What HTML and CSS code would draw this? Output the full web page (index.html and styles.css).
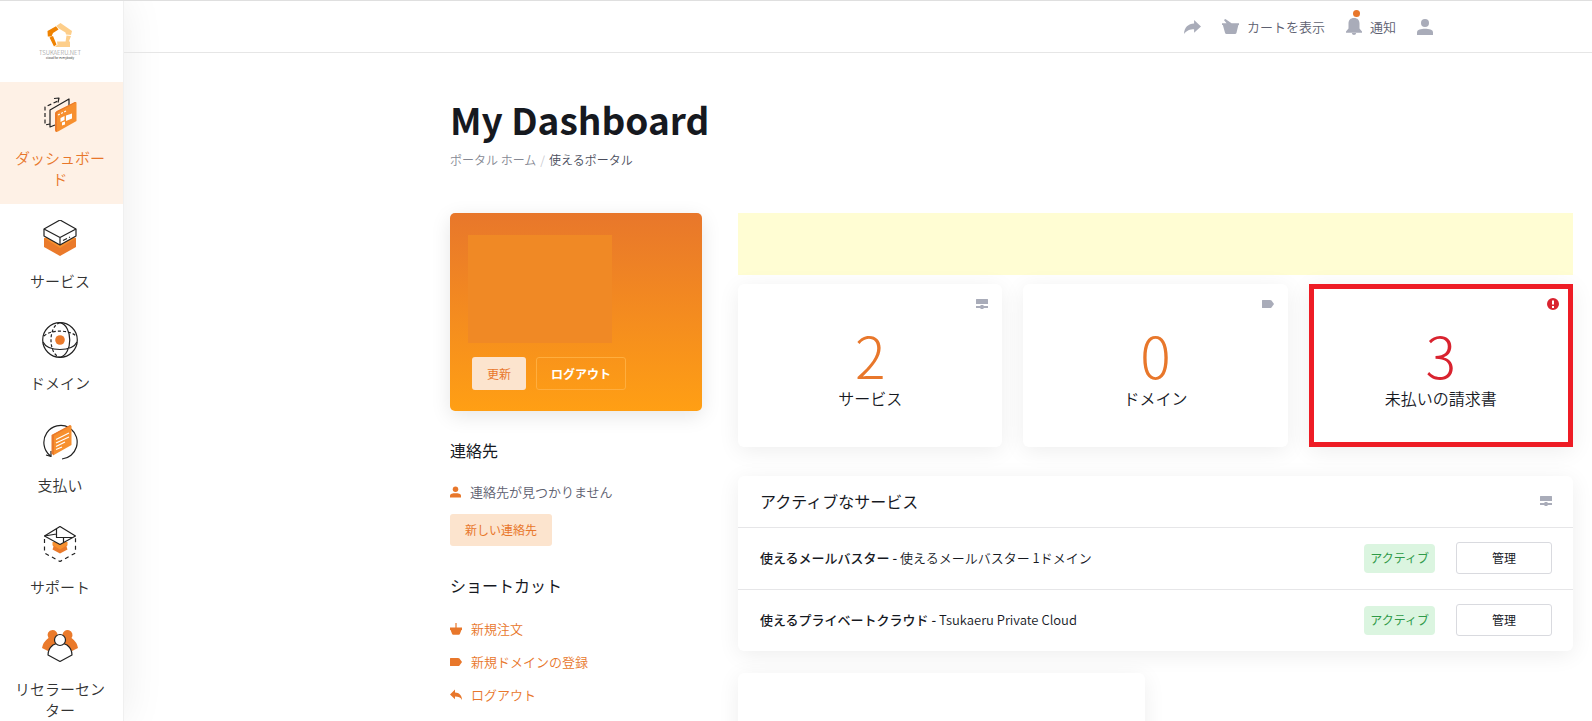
FILE: index.html
```html
<!DOCTYPE html>
<html lang="ja">
<head>
<meta charset="utf-8">
<title>My Dashboard</title>
<link rel="stylesheet" href="styles.css">
</head>
<body>
<svg class="defs" aria-hidden="true">
  <symbol id="i-user" viewBox="0 0 16 16"><circle cx="8" cy="4" r="4"/><path d="M0 16v-2.500C0 10.500 4 9.800 8 9.800s8 .7 8 3.700V16z"/></symbol>
  <symbol id="i-share" viewBox="0 0 16 13"><path d="M9.500 0L16 6l-6.500 6V8.500C5.500 8.500 2.500 9.500 0 13 .3 7 4 3.500 9.500 3.300z"/></symbol>
  <symbol id="i-reply" viewBox="0 0 12 11"><path d="M5 0L0 5l5 4.700V7c3.500 0 5.500.8 7 3.500C12 6 9.500 3.200 5 3z"/></symbol>
  <symbol id="i-cart" viewBox="0 0 16 14"><path d="M1.800.8L3.200 0 9 4h7v1.600h-.6L13.600 13q-.3 1-1.400 1H4.200q-1 0-1.300-1L.8 5.600H0V4h4.300z"/></symbol>
  <symbol id="i-basket" viewBox="0 0 12 12"><path d="M5.400 0h1.200v4.500H12V7h-.6L10 10.800q-.3.900-1.300.9H3.300q-1 0-1.300-.9L.6 7H0V4.500h5.400z"/></symbol>
  <symbol id="i-bell" viewBox="0 0 16 17"><path d="M8 0c3.600 0 5.500 2.200 5.500 5.500v5l2.500 3v1.300H0v-1.300l2.500-3v-5C2.500 2.200 4.400 0 8 0zM5.800 15h4.400q-.3 2-2.200 2t-2.200-2z"/></symbol>
  <symbol id="i-tag" viewBox="0 0 12 8"><path d="M.5 0H8q1 0 1.500.6L12 4 9.500 7.400Q9 8 8 8H.5Q0 8 0 7.500v-7Q0 0 .5 0z"/></symbol>
  <symbol id="i-server" viewBox="0 0 12 10"><path d="M.5 0h11q.5 0 .5.500V5H0V.5Q0 0 .5 0zM0 7h4l1-1h2l1 1h4v2H8L7 10H5L4 9H0z"/></symbol>
  <symbol id="i-alert" viewBox="0 0 12 12"><path fill-rule="evenodd" d="M6 0a6 6 0 1 1 0 12A6 6 0 0 1 6 0zM5 2.500v4h2v-4zM5 8v2h2V8z"/></symbol>
</svg>

<div class="app">
  <nav class="sidebar">
    <a class="brand" href="#" aria-label="TSUKAERU.NET">
      <svg class="brand-mark" viewBox="0 0 26 24" aria-hidden="true">
        <path fill="#ef8200" d="M.5 8L9 3.200l2.500 3.300L6 10l-1.500 3.500H.8zM2.500 14.500L6 13l3.500 8.500L7 23.500z"/>
        <path fill="#fdce8a" d="M9.500 2.800L13.500 0 25 8l-1 4-5-.5-.5-2L11 5zM19.500 12.500l4.500.5-2.500 6.500-3-.5zM10 18.500h13V24H9l-1-1 2.500-1z"/>
      </svg>
      <span class="brand-name">TSUKAERU.NET</span>
      <span class="brand-tag">cloud for everybody</span>
    </a>
    <ul class="menu">
      <li><a class="menu-item active" href="#">
        <svg class="menu-icon" viewBox="0 0 36 36">
          <path stroke-dasharray="4 2.500" d="M8 27l-5 1V10L16 4"/>
          <path d="M12 1.500l5-.5-1 4.500M13 28l-5 2V13L27 2v7"/>
          <path class="mid" d="M15 14L33 5q1.500-.5 1.500 1v18L16 34.500q-3 1-3-2V17q0-2 2-3z"/>
          <path class="deep" d="M13 17q0-2 2-3L33 5l1 .5L16 15q-1 1-1 3v17q-2 0-2-2.500z"/>
          <path class="light" stroke-dasharray="2 1.500" d="M16 18l8-4"/>
          <path class="white" d="M18.500 21l4-2v4l-4 2zM24 18.500l6-2v5L24 24zM20 25.500l3-1v3l-3 1z"/>
        </svg>
        <span>ダッシュボード</span></a></li>
      <li><a class="menu-item" href="#">
        <svg class="menu-icon" viewBox="0 0 36 36">
          <path class="deep" d="M2 18l5-1h22l5 1v9L18 36 2 27z"/>
          <path class="mid" d="M2 18l5-1h22l5 1-16 10z"/>
          <path fill="#fff" d="M18 0l16 9v7l-16 9-16-9V9z"/>
          <path d="M2 9l16 8.500L34 9M18 17.500V25M21 20.500l4-2M27 17.500l1-.5"/>
        </svg>
        <span>サービス</span></a></li>
      <li><a class="menu-item" href="#">
        <svg class="menu-icon" viewBox="0 0 36 36">
          <circle cx="18" cy="18" r="17.300"/>
          <path d="M18 .7c13 3 13 31.600 0 34.600M1 20c5 10 29 10 34 0"/>
          <path stroke-dasharray="3 2" d="M18 .7c-12 3-12 31.600 0 34.600M2 14c6-6.500 26-6.500 32 0"/>
          <circle class="deep" cx="18" cy="18" r="4.800"/>
        </svg>
        <span>ドメイン</span></a></li>
      <li><a class="menu-item" href="#">
        <svg class="menu-icon" viewBox="0 0 36 36">
          <path d="M27 3.500A17 17 0 0 0 8 31.500M29 5a17 17 0 0 1-9 30M4 31l5 1.500L9 27"/>
          <path class="mid" d="M10 11L28 1.500q1.500-.5 1.500 1V21L11 31.500z"/>
          <path class="deep" d="M9.500 11L28 1l1 .7L12 11.500V31l-2.500-1z"/>
          <path class="light" d="M14 15.500l13-6.500M14 19l13-6M14 22.500l9-4.500M14 25.500l6-2.500"/>
        </svg>
        <span>支払い</span></a></li>
      <li><a class="menu-item" href="#">
        <svg class="menu-icon" viewBox="0 0 36 36">
          <path class="deep" d="M10.500 19h15l-1 1.500 1 3-7.500 4-7.500-4 1-3z"/>
          <path class="mid" d="M10.500 16h15v3L18 23.500 10.500 19z"/>
          <path fill="#fff" d="M18 .5L33.500 10 18 18.500 2.500 10z"/>
          <path d="M2.500 10L14.500 8M14.500 3v8.500h16M21.500 16v-4.500"/>
          <path stroke-dasharray="4 3.500" d="M2.500 13v14L18 35.500 33.500 27V12"/>
        </svg>
        <span>サポート</span></a></li>
      <li><a class="menu-item" href="#">
        <svg class="menu-icon" viewBox="0 0 36 36">
          <path class="deep" d="M10.500 2a5 5 0 0 1 5 5L18 12l2.500-5a5 5 0 1 1 9 3q5.500 4 6.500 10l-6 3H6l-6-3Q1 14 6.500 10a5 5 0 0 1 4-8z"/>
          <path fill="#fff" d="M11 17q7-4 14 0 5 4 5 10l-12 6.500L6 27q0-6 5-10z"/>
          <circle cx="18" cy="12" r="5.500" fill="#fff"/>
        </svg>
        <span>リセラーセンター</span></a></li>
    </ul>
  </nav>

  <div class="page">
    <header class="topbar">
      <a class="top-link" href="#" aria-label="共有"><svg class="ic-share"><use href="#i-share"/></svg></a>
      <a class="top-link" href="#"><svg class="ic-cart"><use href="#i-cart"/></svg>カートを表示</a>
      <a class="top-link" href="#"><span class="bell"><svg class="ic-bell"><use href="#i-bell"/></svg><i class="dot"></i></span>通知</a>
      <a class="top-link" href="#" aria-label="アカウント"><svg class="ic-user"><use href="#i-user"/></svg></a>
    </header>

    <main class="content">
      <h1>My Dashboard</h1>
      <nav class="crumbs"><a href="#">ポータル ホーム</a><span class="sep">/</span><span>使えるポータル</span></nav>

      <div class="columns">
        <aside class="side">
          <section class="profile">
            <div class="profile-info"></div>
            <div class="profile-actions">
              <button class="btn btn-soft">更新</button>
              <button class="btn btn-ghost">ログアウト</button>
            </div>
          </section>
          <section class="contacts">
            <h2>連絡先</h2>
            <p class="line muted"><svg class="ic-line ic-person"><use href="#i-user"/></svg>連絡先が見つかりません</p>
            <button class="btn btn-soft">新しい連絡先</button>
          </section>
          <section class="shortcuts">
            <h2>ショートカット</h2>
            <ul>
              <li><a class="line" href="#"><svg class="ic-line"><use href="#i-basket"/></svg>新規注文</a></li>
              <li><a class="line" href="#"><svg class="ic-line"><use href="#i-tag"/></svg>新規ドメインの登録</a></li>
              <li><a class="line" href="#"><svg class="ic-line"><use href="#i-reply"/></svg>ログアウト</a></li>
            </ul>
          </section>
        </aside>

        <div class="main-col">
          <div class="notice"></div>
          <div class="stats">
            <a class="card stat" href="#"><svg class="ic-corner"><use href="#i-server"/></svg><strong>2</strong><span>サービス</span></a>
            <a class="card stat" href="#"><svg class="ic-corner"><use href="#i-tag"/></svg><strong>0</strong><span>ドメイン</span></a>
            <a class="card stat unpaid" href="#"><svg class="ic-corner"><use href="#i-alert"/></svg><strong>3</strong><span>未払いの請求書</span></a>
          </div>
          <section class="card services">
            <header><h2>アクティブなサービス</h2><svg class="ic-server"><use href="#i-server"/></svg></header>
            <ul>
              <li><p><b>使えるメールバスター - </b>使えるメールバスター 1ドメイン</p><span class="badge">アクティブ</span><button class="btn btn-line">管理</button></li>
              <li><p><b>使えるプライベートクラウド - </b>Tsukaeru Private Cloud</p><span class="badge">アクティブ</span><button class="btn btn-line">管理</button></li>
            </ul>
          </section>
          <section class="card blank"></section>
        </div>
      </div>
    </main>
  </div>
</div>
</body>
</html>
```
FILE: styles.css
```css
* { box-sizing: border-box; }

html { height: 100%; }

body {
  margin: 0;
  height: 100%;
  overflow: hidden;
  font-family: "Noto Sans CJK JP", sans-serif;
  font-size: 13px;
  line-height: 20px;
  color: #16191f;
  background: #fff;
}

ul { list-style: none; margin: 0; padding: 0; }
a { color: inherit; text-decoration: none; }
h1, h2, p { margin: 0; }
svg { display: block; fill: currentColor; flex: none; }
.defs { position: absolute; width: 0; height: 0; }

.app {
  display: flex;
  height: 100%;
  overflow: hidden;
  border-top: 1px solid #dfdfdf;
}

/* Sidebar */
.sidebar {
  flex: none;
  width: 124px;
  border-right: 1px solid #f0f0f0;
  box-shadow: 0 0 40px rgba(0, 0, 0, .08);
}

.brand {
  display: flex;
  flex-direction: column;
  align-items: center;
  height: 81px;
  padding: 22px 3px 0 0;
  color: #8d8d8d;
}
.brand-mark { width: 26px; height: 24px; }
.brand-name {
  margin-top: 2px;
  font: 300 6px/7px "Noto Sans CJK JP", sans-serif;
}
.brand-tag {
  font: 3px/4px "Noto Sans CJK JP", sans-serif;
  color: #333;
}

.menu { display: flex; flex-direction: column; gap: 1px; }
.menu-item {
  display: flex;
  flex-direction: column;
  align-items: center;
  gap: 14px;
  padding: 15px 15px 15px 12px;
  font-size: 15px;
  font-weight: 350;
  line-height: 21px;
  text-align: center;
  word-break: break-all;
  line-break: anywhere;
  color: #333;
}
.menu-item.active { background: #fef1e6; color: #e8772b; }
.menu-icon {
  width: 36px;
  height: 36px;
  fill: none;
  stroke: #222;
  stroke-width: 1.2;
  stroke-linejoin: round;
}
.deep { fill: #ea7a2b; stroke: none; }
.mid { fill: #f7902f; stroke: none; }
.white { fill: #fff; stroke: none; }
.light { stroke: #fff; }

/* Top bar */
.page { flex: 1; min-width: 0; }
.topbar {
  display: flex;
  justify-content: flex-end;
  align-items: center;
  gap: 21px;
  height: 52px;
  padding-right: 159px;
  border-bottom: 1px solid #e6e6e6;
  color: #5d6070;
}
.top-link { display: flex; align-items: center; gap: 8px; font-weight: 350; }
.top-link svg { color: #a9acb9; }
.ic-share { width: 17px; height: 14px; }
.ic-cart { width: 17px; height: 15px; }
.ic-bell { width: 16px; height: 17px; }
.ic-user { width: 16px; height: 16px; }
.bell { position: relative; }
.dot {
  position: absolute;
  top: -8px;
  left: 7px;
  width: 7px;
  height: 7px;
  border-radius: 50%;
  background: #e8772b;
}

/* Content */
.content { padding: 40px 19px 0 326px; }
h1 { font-size: 37px; font-weight: 700; line-height: 52px; }
.crumbs {
  display: flex;
  gap: 4px;
  margin-top: 5px;
  font-size: 12px;
  font-weight: 350;
  color: #4a4d5c;
}
.crumbs a { color: #858893; }
.sep { color: #c9cad0; }

.columns {
  display: grid;
  grid-template-columns: 252px minmax(0, 1fr);
  gap: 36px;
  margin-top: 43px;
}
h2 { font-size: 16px; font-weight: 400; line-height: 24px; }

.btn {
  height: 32px;
  padding: 0 14px;
  border: 1px solid transparent;
  border-radius: 3px;
  font: 12px/18px "Noto Sans CJK JP", sans-serif;
  background: none;
}
.btn-soft { background: #fce4ce; color: #e8772b; }
.btn-ghost { border-color: #ffae3e; color: #fff; font-weight: 700; }
.btn-line { width: 96px; border-color: #d9dadf; background: #fff; color: #16191f; }

.profile {
  padding: 22px 18px 21px;
  border-radius: 5px;
  background: linear-gradient(#e8772b, #ff9f14);
  box-shadow: 0 5px 20px rgba(0, 0, 0, .1);
}
.profile-info { width: 144px; height: 108px; background: #f08925; }
.profile-actions { display: flex; gap: 10px; padding: 14px 4px 0; }
.profile-actions .btn { height: 33px; }

.contacts { margin-top: 27px; }
.line { display: flex; align-items: center; gap: 9px; color: #e8772b; font-weight: 350; }
.contacts .line { margin: 20px 0 12px; }
.muted { color: #5d6070; }
.ic-line { width: 12px; height: 12px; color: #e8772b; }
.ic-person { width: 11px; }
.shortcuts { margin-top: 27px; }
.shortcuts ul { display: grid; gap: 13px; margin-top: 22px; }

.notice { height: 62px; background: #fffdd3; }
.card {
  border-radius: 6px;
  background: #fff;
  box-shadow: 0 4px 22px rgba(0, 0, 0, .07);
}
.stats {
  display: grid;
  grid-template-columns: repeat(3, 1fr);
  gap: 21px;
  margin-top: 9px;
}
.stat {
  position: relative;
  display: flex;
  flex-direction: column;
  align-items: center;
  gap: 2px;
  height: 163px;
  padding-top: 40px;
  border: 0 solid #ee1c25;
  font-size: 16px;
  font-weight: 350;
  line-height: 24px;
}
.stat strong { font-size: 57px; font-weight: 300; line-height: 60px; color: #e8772b; }
.ic-corner { position: absolute; top: 14px; right: 14px; width: 12px; height: 12px; color: #a9acb9; }
.unpaid { padding-top: 35px; border-width: 5px; border-radius: 0; }
.unpaid .ic-corner { top: 9px; right: 9px; }
.unpaid strong, .unpaid .ic-corner { color: #d9232f; }

.services { margin-top: 29px; }
.services header {
  display: flex;
  justify-content: space-between;
  align-items: center;
  height: 51px;
  padding: 0 21px 2px 22px;
}
.ic-server { width: 12px; height: 10px; }
.services header svg { color: #a9acb9; }
.services li {
  display: flex;
  align-items: center;
  height: 62px;
  padding: 0 21px 1px 22px;
  border-top: 1px solid #e6e6e8;
}
.services p { flex: 1; font-weight: 350; }
.services b { font-weight: 500; }
.badge {
  margin-right: 21px;
  padding: 5px 6px 6px;
  border-radius: 4px;
  background: #dbf5e0;
  color: #2f9a48;
  font-size: 12px;
  line-height: 18px;
}
.blank { width: 407px; max-width: 49%; height: 120px; margin-top: 22px; }
```
